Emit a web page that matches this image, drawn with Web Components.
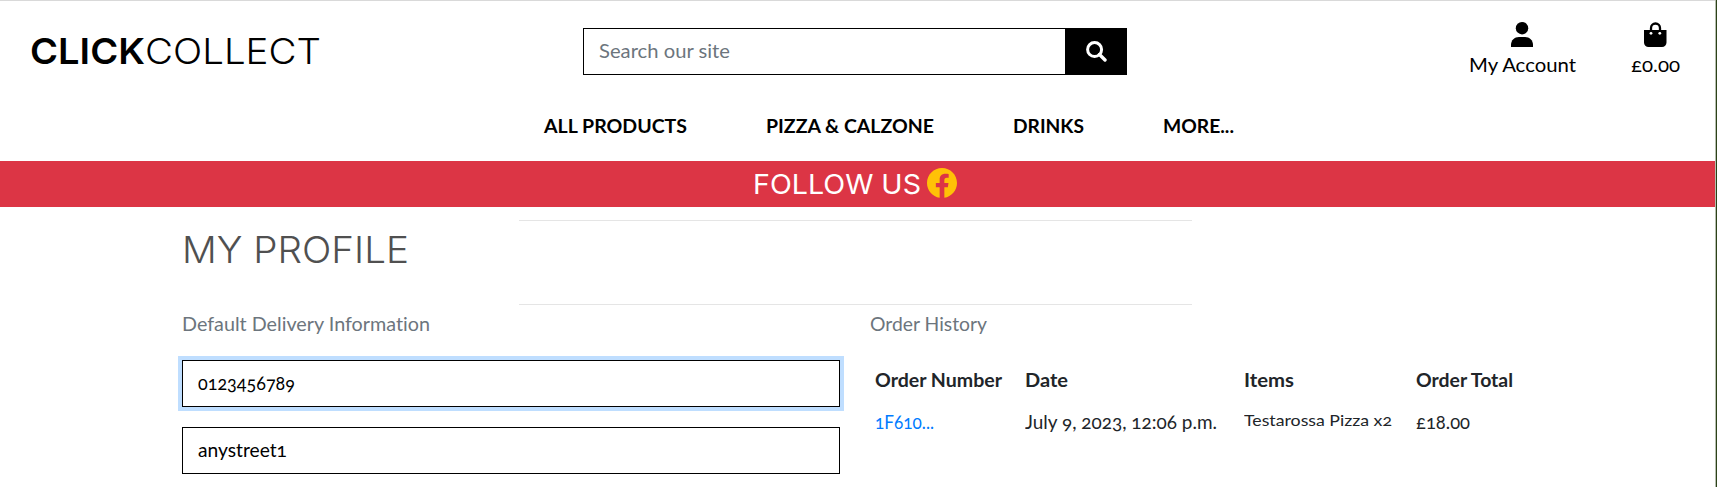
<!DOCTYPE html>
<html lang="en">
<head>
<meta charset="utf-8">
<title>Click Collect - My Profile</title>
<style>
html,body{margin:0;height:487px;overflow:hidden;background:#fff}
body{font-family:Lato,"Open Sans",sans-serif;font-size:19px;color:#212529;font-variant-numeric:oldstyle-nums;font-variant-ligatures:none}
</style>
</head>
<body>
<cc-page></cc-page>
<script>
const define=(name,html,init)=>customElements.define(name,class extends HTMLElement{
  connectedCallback(){
    if(this.shadowRoot)return;
    this.attachShadow({mode:'open'}).innerHTML=html;
    if(init)init.call(this);
  }
});

// Single line of text whose letters are widened to the given width.
define('cc-text','<style>:host{display:block;white-space:nowrap;line-height:24px}span{display:inline-block;transform-origin:0 50%}</style><span><slot></slot></span>',function(){
  const target=+this.getAttribute('w'),s=this.shadowRoot.querySelector('span');
  this.style.width=target+'px';
  s.style.transform='scaleX('+target/s.getBoundingClientRect().width+')';
});

define('cc-search',`<style>
:host{display:flex;width:544px;height:47px}
.field{box-sizing:border-box;width:483px;border:1px solid #000;padding:10px 15px;color:#6c757d}
.btn{flex:1;background:#000;display:flex;align-items:center;justify-content:center}
svg{margin-top:-1px}
</style><div class="field"><cc-text w="131">Search our site</cc-text></div>
<div class="btn"><svg width="21" height="21" viewBox="0 0 21 21" fill="none" stroke="#fff" stroke-width="3"><circle cx="8.600" cy="8.600" r="7"/><path d="M13.500 13.500l5.500 5.500" stroke-width="3.400" stroke-linecap="round"/></svg></div>`);

define('cc-header',`<style>
:host{display:block;height:161px;box-sizing:border-box;border-top:1px solid #d9d9d9;color:#000}
.top{display:grid;grid-template-columns:552px 1fr auto;height:101px;padding:0 35px 0 31px}
.logo{display:flex;padding-top:29px;font-family:Inter,sans-serif;font-size:36px;font-weight:300;margin-left:-1px}
.logo cc-text{line-height:42px}
.logo .b{font-weight:600}
cc-search{margin-top:27px}
.links{display:flex;gap:55px;padding-top:21px}
.links div{display:flex;flex-direction:column;align-items:center;gap:6px}
svg{display:block}
.links .user{margin-left:-2px}
nav{display:flex;gap:79px;padding:12px 0 0 544px;font-weight:700}
</style>
<div class="top"><div class="logo"><cc-text class="b" w="115">CLICK</cc-text><cc-text w="176">COLLECT</cc-text></div>
<cc-search></cc-search>
<div class="links"><div><svg class="user" width="22" height="25" viewBox="0 0 22 25"><circle cx="11" cy="6.200" r="6.200"/><path d="M0 25v-2c0-5 3.500-8 8-8h6c4.500 0 8 3 8 8v2z"/></svg><cc-text w="107">My Account</cc-text></div>
<div><svg width="23" height="25" viewBox="0 0 23 25"><path d="M7 9V6a4.500 4.500 0 0 1 9 0v3" fill="none" stroke="#000" stroke-width="2.300"/><path d="M0 8h22.500v12.500a4.500 4.500 0 0 1-4.500 4.500H4.500A4.500 4.500 0 0 1 0 20.500z"/><circle cx="7" cy="11.300" r="1.400" fill="#fff"/><circle cx="15.800" cy="11.300" r="1.400" fill="#fff"/></svg><cc-text w="49">£0.00</cc-text></div></div></div>
<nav><cc-text w="143">ALL PRODUCTS</cc-text><cc-text w="168">PIZZA &amp; CALZONE</cc-text><cc-text w="71">DRINKS</cc-text><cc-text w="71">MORE...</cc-text></nav>`);

define('cc-banner',`<style>
:host{display:flex;height:46px;background:#dc3545;color:#fff;font-size:27px;padding-left:753px;gap:6px}
cc-text{font-family:Inter,sans-serif;font-weight:400;line-height:47px}svg{margin-top:7px}
</style><cc-text w="168">FOLLOW US</cc-text>
<svg width="30" height="30" viewBox="8 8 496 496"><path fill="#ffc107" d="M504 256C504 119 393 8 256 8S8 119 8 256c0 123.780 90.690 226.380 209.250 245V327.690h-63V256h63v-54.640c0-62.150 37-96.480 93.670-96.480 27.140 0 55.520 4.840 55.520 4.840v61h-31.280c-30.800 0-40.410 19.120-40.410 38.730V256h68.780l-11 71.690h-57.780V501C413.310 482.380 504 379.780 504 256z"/></svg>`);

define('cc-field',`<style>
:host{display:block;box-sizing:border-box;height:47px;border:1px solid #000;padding:10px 15px;color:#000}
:host([active]){box-shadow:0 0 0 4px #bfdeff}
</style><slot></slot>`);

define('cc-orders',`<style>
:host{display:grid;grid-template-columns:150px 219px 172px auto;row-gap:18px;color:#212529}
.h{font-weight:700}a{color:#007bff}
.s{font-size:16px;margin-top:-2px}
</style>
<cc-text class="h" w="127">Order Number</cc-text><cc-text class="h" w="43">Date</cc-text><cc-text class="h" w="50">Items</cc-text><cc-text class="h" w="97">Order Total</cc-text>
<a><cc-text w="59">1F610...</cc-text></a><cc-text w="192">July 9, 2023, 12:06 p.m.</cc-text><cc-text class="s" w="148">Testarossa Pizza x2</cc-text><cc-text w="54">£18.00</cc-text>`);

define('cc-profile',`<style>
:host{display:block;padding:13px 0 0 182px}
.title{display:grid;grid-template-columns:337px 673px}
.title cc-text{font-family:Inter,sans-serif;font-size:36.500px;font-weight:350;line-height:44px;color:#505050;padding:8px 0 0 0}
.lines{height:85px;box-sizing:border-box;border:solid #e5e5e5;border-width:1px 0}
.cols{display:grid;grid-template-columns:658px 1fr;column-gap:30px;padding-top:7px}
.sub{color:#6c757d}
.form{display:grid;gap:20px;padding-top:24px}
cc-orders{padding:26px 0 0 5px;margin-top:6px}
</style>
<div class="title"><cc-text w="227">MY PROFILE</cc-text><div class="lines"></div></div>
<div class="cols"><div><cc-text class="sub" w="248">Default Delivery Information</cc-text>
<div class="form"><cc-field active><cc-text w="97">0123456789</cc-text></cc-field><cc-field><cc-text w="89">anystreet1</cc-text></cc-field></div></div>
<div><cc-text class="sub" w="117">Order History</cc-text><cc-orders></cc-orders></div></div>`);

define('cc-page',`<style>
:host{display:grid;grid-template-columns:1fr 2px;height:487px}
.edge{box-sizing:border-box;background:#2c4219;border-left:1px solid #b5bdae}
</style><main><cc-header></cc-header><cc-banner></cc-banner><cc-profile></cc-profile></main><div class="edge"></div>`);
</script>
</body>
</html>
